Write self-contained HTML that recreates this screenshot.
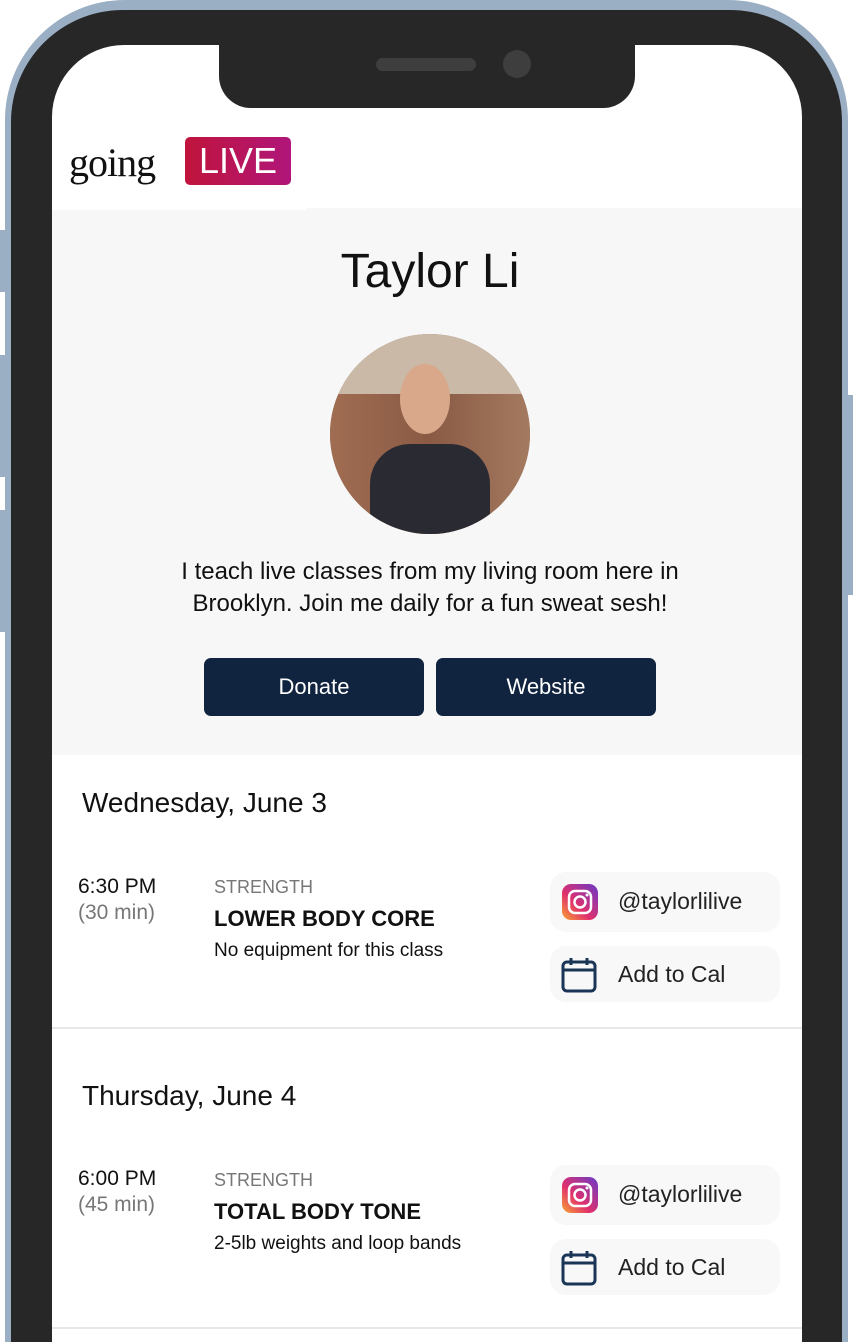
<!DOCTYPE html><html><head><style>
*{margin:0;padding:0;box-sizing:border-box}
html,body{width:853px;height:1342px;overflow:hidden}
body{background:#fff;font-family:"Liberation Sans",sans-serif;position:relative}
.a{position:absolute}
.frame{left:5px;top:0;width:843px;height:1342px;background:#9aaec4;border-radius:120px 120px 0 0}
.body{left:11px;top:10px;width:831px;height:1332px;background:#272727;border-radius:112px 112px 0 0}
.screen{left:52px;top:45px;width:750px;height:1297px;background:#fff;border-radius:72px 72px 0 0;overflow:hidden}
.notch{left:219px;top:40px;width:416px;height:68px;background:#272727;border-radius:0 0 32px 32px}
.btn{background:#9aaec4;width:6px}
.t{color:#111}
.pill{position:absolute;left:550px;width:230px;height:60px;background:#f8f8f8;border-radius:16px;font-size:23px;color:#222}
.pill span{position:absolute;left:68px;top:16px}
.day{position:absolute;left:82px;font-size:28px;color:#111}
.time{position:absolute;left:78px;font-size:21px;color:#111;line-height:26px}
.time i{font-style:normal;color:#777}
.cls{position:absolute;left:214px}
.cat{font-size:18px;color:#777}
.nm{font-size:22px;font-weight:bold;color:#111;margin-top:8px}
.ds{font-size:19px;color:#111;margin-top:8px}
</style></head><body>
<div class="a frame"></div>
<div class="a btn" style="left:0;top:230px;height:62px"></div>
<div class="a btn" style="left:0;top:355px;height:122px"></div>
<div class="a btn" style="left:0;top:510px;height:122px"></div>
<div class="a btn" style="left:847px;top:395px;height:200px"></div>
<div class="a body"></div>
<div class="a screen">
 <div class="a" style="left:0;top:163px;width:750px;height:547px;background:#f7f7f7"></div>
 <div class="a" style="left:0;top:160px;width:255px;height:5px;background:#fff"></div>
</div>
<div class="a notch"></div>
<div class="a" style="left:376px;top:58px;width:100px;height:13px;border-radius:7px;background:#3e3e3e"></div>
<div class="a" style="left:503px;top:50px;width:28px;height:28px;border-radius:50%;background:#3e3e3e"></div>
<div class="a" style="left:69px;top:138px;font-family:'Liberation Serif',serif;font-size:40px;letter-spacing:-1px;color:#111;line-height:50px">going</div>
<div class="a" style="left:185px;top:137px;width:106px;height:48px;border-radius:5px;background:linear-gradient(90deg,#c0143c,#b0167a);color:#fff;font-size:36px;text-align:center;line-height:48px">LIVE</div>
<div class="a t" style="left:0;width:860px;top:244px;text-align:center;font-size:48px">Taylor Li</div>
<div class="a" style="left:330px;top:334px;width:200px;height:200px;border-radius:50%;overflow:hidden;background:#9a7560">
 <div class="a" style="left:0;top:0;width:200px;height:60px;background:#c9b9a6"></div>
 <div class="a" style="left:0;top:60px;width:200px;height:140px;background:linear-gradient(90deg,#a06d52,#8a5a44,#a47a60)"></div>
 <div class="a" style="left:70px;top:30px;width:50px;height:70px;border-radius:50%;background:#d9a88a"></div>
 <div class="a" style="left:40px;top:110px;width:120px;height:100px;border-radius:40px 40px 0 0;background:#2a2a33"></div>
</div>
<div class="a t" style="left:0;width:860px;top:556px;text-align:center;font-size:24px;line-height:32px">I teach live classes from my living room here in<br>Brooklyn. Join me daily for a fun sweat sesh!</div>
<div class="a" style="left:204px;top:658px;width:220px;height:58px;border-radius:7px;background:#10243f;color:#fff;font-size:22px;text-align:center;line-height:58px">Donate</div>
<div class="a" style="left:436px;top:658px;width:220px;height:58px;border-radius:7px;background:#10243f;color:#fff;font-size:22px;text-align:center;line-height:58px">Website</div>

<div class="day" style="top:787px">Wednesday, June 3</div>
<div class="time" style="top:874px">6:30 PM<br><i>(30 min)</i></div>
<div class="cls" style="top:877px"><div class="cat">STRENGTH</div><div class="nm">LOWER BODY CORE</div><div class="ds">No equipment for this class</div></div>
<div class="a" style="left:52px;top:1027px;width:750px;height:2px;background:#e8e8e8"></div>

<div class="day" style="top:1080px">Thursday, June 4</div>
<div class="time" style="top:1166px">6:00 PM<br><i>(45 min)</i></div>
<div class="cls" style="top:1170px"><div class="cat">STRENGTH</div><div class="nm">TOTAL BODY TONE</div><div class="ds">2-5lb weights and loop bands</div></div>
<div class="a" style="left:52px;top:1327px;width:750px;height:2px;background:#e8e8e8"></div>

<svg width="0" height="0" style="position:absolute"><defs><linearGradient id="g" x1="0" y1="1" x2="1" y2="0"><stop offset="0" stop-color="#f9a530"/><stop offset=".4" stop-color="#e1306c"/><stop offset="1" stop-color="#6a3ac8"/></linearGradient></defs></svg>
<div class="pill" style="top:872px"><svg class="a" style="left:12px;top:12px" width="36" height="36" viewBox="0 0 36 36"><rect width="36" height="36" rx="9" fill="url(#g)"/><rect x="7" y="7" width="22" height="22" rx="6" fill="none" stroke="#fff" stroke-width="2.5"/><circle cx="18" cy="18" r="5.5" fill="none" stroke="#fff" stroke-width="2.5"/><circle cx="25" cy="11" r="1.5" fill="#fff"/></svg><span>@taylorlilive</span></div>
<div class="pill" style="top:946px;height:56px"><svg class="a" style="left:10px;top:10px" width="38" height="38" viewBox="0 0 38 38"><rect x="3" y="6" width="32" height="29" rx="4" fill="none" stroke="#1a3556" stroke-width="3"/><line x1="3" y1="14" x2="35" y2="14" stroke="#1a3556" stroke-width="3"/><line x1="11" y1="2" x2="11" y2="9" stroke="#1a3556" stroke-width="3"/><line x1="27" y1="2" x2="27" y2="9" stroke="#1a3556" stroke-width="3"/></svg><span style="top:15px">Add to Cal</span></div>
<div class="pill" style="top:1165px"><svg class="a" style="left:12px;top:12px" width="36" height="36" viewBox="0 0 36 36"><rect width="36" height="36" rx="9" fill="url(#g)"/><rect x="7" y="7" width="22" height="22" rx="6" fill="none" stroke="#fff" stroke-width="2.5"/><circle cx="18" cy="18" r="5.5" fill="none" stroke="#fff" stroke-width="2.5"/><circle cx="25" cy="11" r="1.5" fill="#fff"/></svg><span>@taylorlilive</span></div>
<div class="pill" style="top:1239px;height:56px"><svg class="a" style="left:10px;top:10px" width="38" height="38" viewBox="0 0 38 38"><rect x="3" y="6" width="32" height="29" rx="4" fill="none" stroke="#1a3556" stroke-width="3"/><line x1="3" y1="14" x2="35" y2="14" stroke="#1a3556" stroke-width="3"/><line x1="11" y1="2" x2="11" y2="9" stroke="#1a3556" stroke-width="3"/><line x1="27" y1="2" x2="27" y2="9" stroke="#1a3556" stroke-width="3"/></svg><span style="top:15px">Add to Cal</span></div>
</body></html>
